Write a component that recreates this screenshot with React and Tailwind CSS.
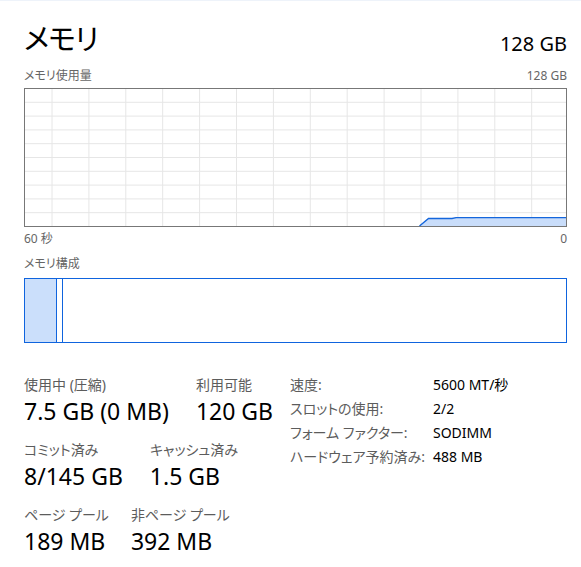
const font = "[font-family:'Noto_Sans','Noto_Sans_CJK_JP',sans-serif] [font-feature-settings:'palt']"

const vLines = [28, 64.9, 101.8, 138.7, 175.6, 212.5, 249.4, 286.3, 323.2, 360.1, 397, 433.9, 470.8, 507.7]
const hLines = [13.8, 27.6, 41.4, 55.2, 69, 82.8, 96.6, 110.4, 124.2]

function UsageChart() {
  const w = 543
  const h = 139
  const pts = [
    [395.5, 138],
    [404.5, 130.5],
    [428, 130.5],
    [432, 129.6],
    [w, 129.6],
  ]
  const line = pts.map((p) => p.join(',')).join(' ')
  const area = `${line} ${w},${h - 1} 395.5,${h - 1}`
  return (
    <svg width={w} height={h} className="block">
      {vLines.map((x) => (
        <line key={'v' + x} x1={x} y1={0} x2={x} y2={h} stroke="#e6e6e6" strokeWidth="1" />
      ))}
      {hLines.map((y) => (
        <line key={'h' + y} x1={0} y1={y + 0.5} x2={w} y2={y + 0.5} stroke="#e6e6e6" strokeWidth="1" />
      ))}
      <polygon points={area} fill="#c9ddfa" />
      <polyline points={line} fill="none" stroke="#1466dc" strokeWidth="1.4" />
      <rect x="0.5" y="0.5" width={w - 1} height={h - 1} fill="none" stroke="#777777" strokeWidth="1" />
    </svg>
  )
}

function Stat({ label, value }) {
  return (
    <div className="flex flex-col">
      <span className="text-[14px] leading-[20px] text-[#5c5c5c]">{label}</span>
      <span className="text-[23px] leading-[32px] text-black">{value}</span>
    </div>
  )
}

const details = [
  ['速度:', '5600 MT/秒'],
  ['スロットの使用:', '2/2'],
  ['フォーム ファクター:', 'SODIMM'],
  ['ハードウェア予約済み:', '488 MB'],
]

export default function App() {
  return (
    <div className={`w-[581px] h-[567px] bg-white border-t border-[#eef3fa] pl-[24px] pr-[14px] ${font}`}>
      {/* header */}
      <div className="flex items-end justify-between pt-[18px]">
        <h1 className="text-[29px] leading-[40px] tracking-[-1px] text-black font-normal">メモリ</h1>
        <span className="text-[20px] leading-[24px] text-black pb-[3px]">128 GB</span>
      </div>

      <div className="flex justify-between mt-[9px] mb-[4px] text-[12px] leading-[16px] text-[#666666]">
        <span>メモリ使用量</span>
        <span>128 GB</span>
      </div>

      <UsageChart />

      <div className="flex justify-between mt-[4px] text-[12px] leading-[16px] text-[#666666]">
        <span>60 秒</span>
        <span>0</span>
      </div>

      <div className="mt-[9px] text-[12px] leading-[16px] text-[#666666]">メモリ構成</div>

      {/* composition */}
      <div className="mt-[6px] h-[65px] border border-[#0f64de] flex">
        <div className="w-[32px] bg-[#cbdffb] border-r border-[#0f64de]" />
        <div className="w-[6px] border-r border-[#0f64de]" />
        <div className="flex-1" />
      </div>

      {/* stats */}
      <div className="flex items-start mt-[32px]">
        <div className="w-[266px] flex flex-col gap-[13px]">
          <div className="flex gap-[27px]">
            <Stat label="使用中 (圧縮)" value="7.5 GB (0 MB)" />
            <Stat label="利用可能" value="120 GB" />
          </div>
          <div className="flex gap-[27px]">
            <Stat label="コミット済み" value="8/145 GB" />
            <Stat label="キャッシュ済み" value="1.5 GB" />
          </div>
          <div className="flex gap-[22px]">
            <Stat label="ページ プール" value="189 MB" />
            <Stat label="非ページ プール" value="392 MB" />
          </div>
        </div>
        <div className="grid grid-cols-[143px_1fr] auto-rows-[24px] text-[14px] leading-[24px] -mt-[2px]">
          {details.map(([k, v]) => (
            <div key={k} className="contents">
              <span className="text-[#5c5c5c]">{k}</span>
              <span className="text-black">{v}</span>
            </div>
          ))}
        </div>
      </div>
    </div>
  )
}
